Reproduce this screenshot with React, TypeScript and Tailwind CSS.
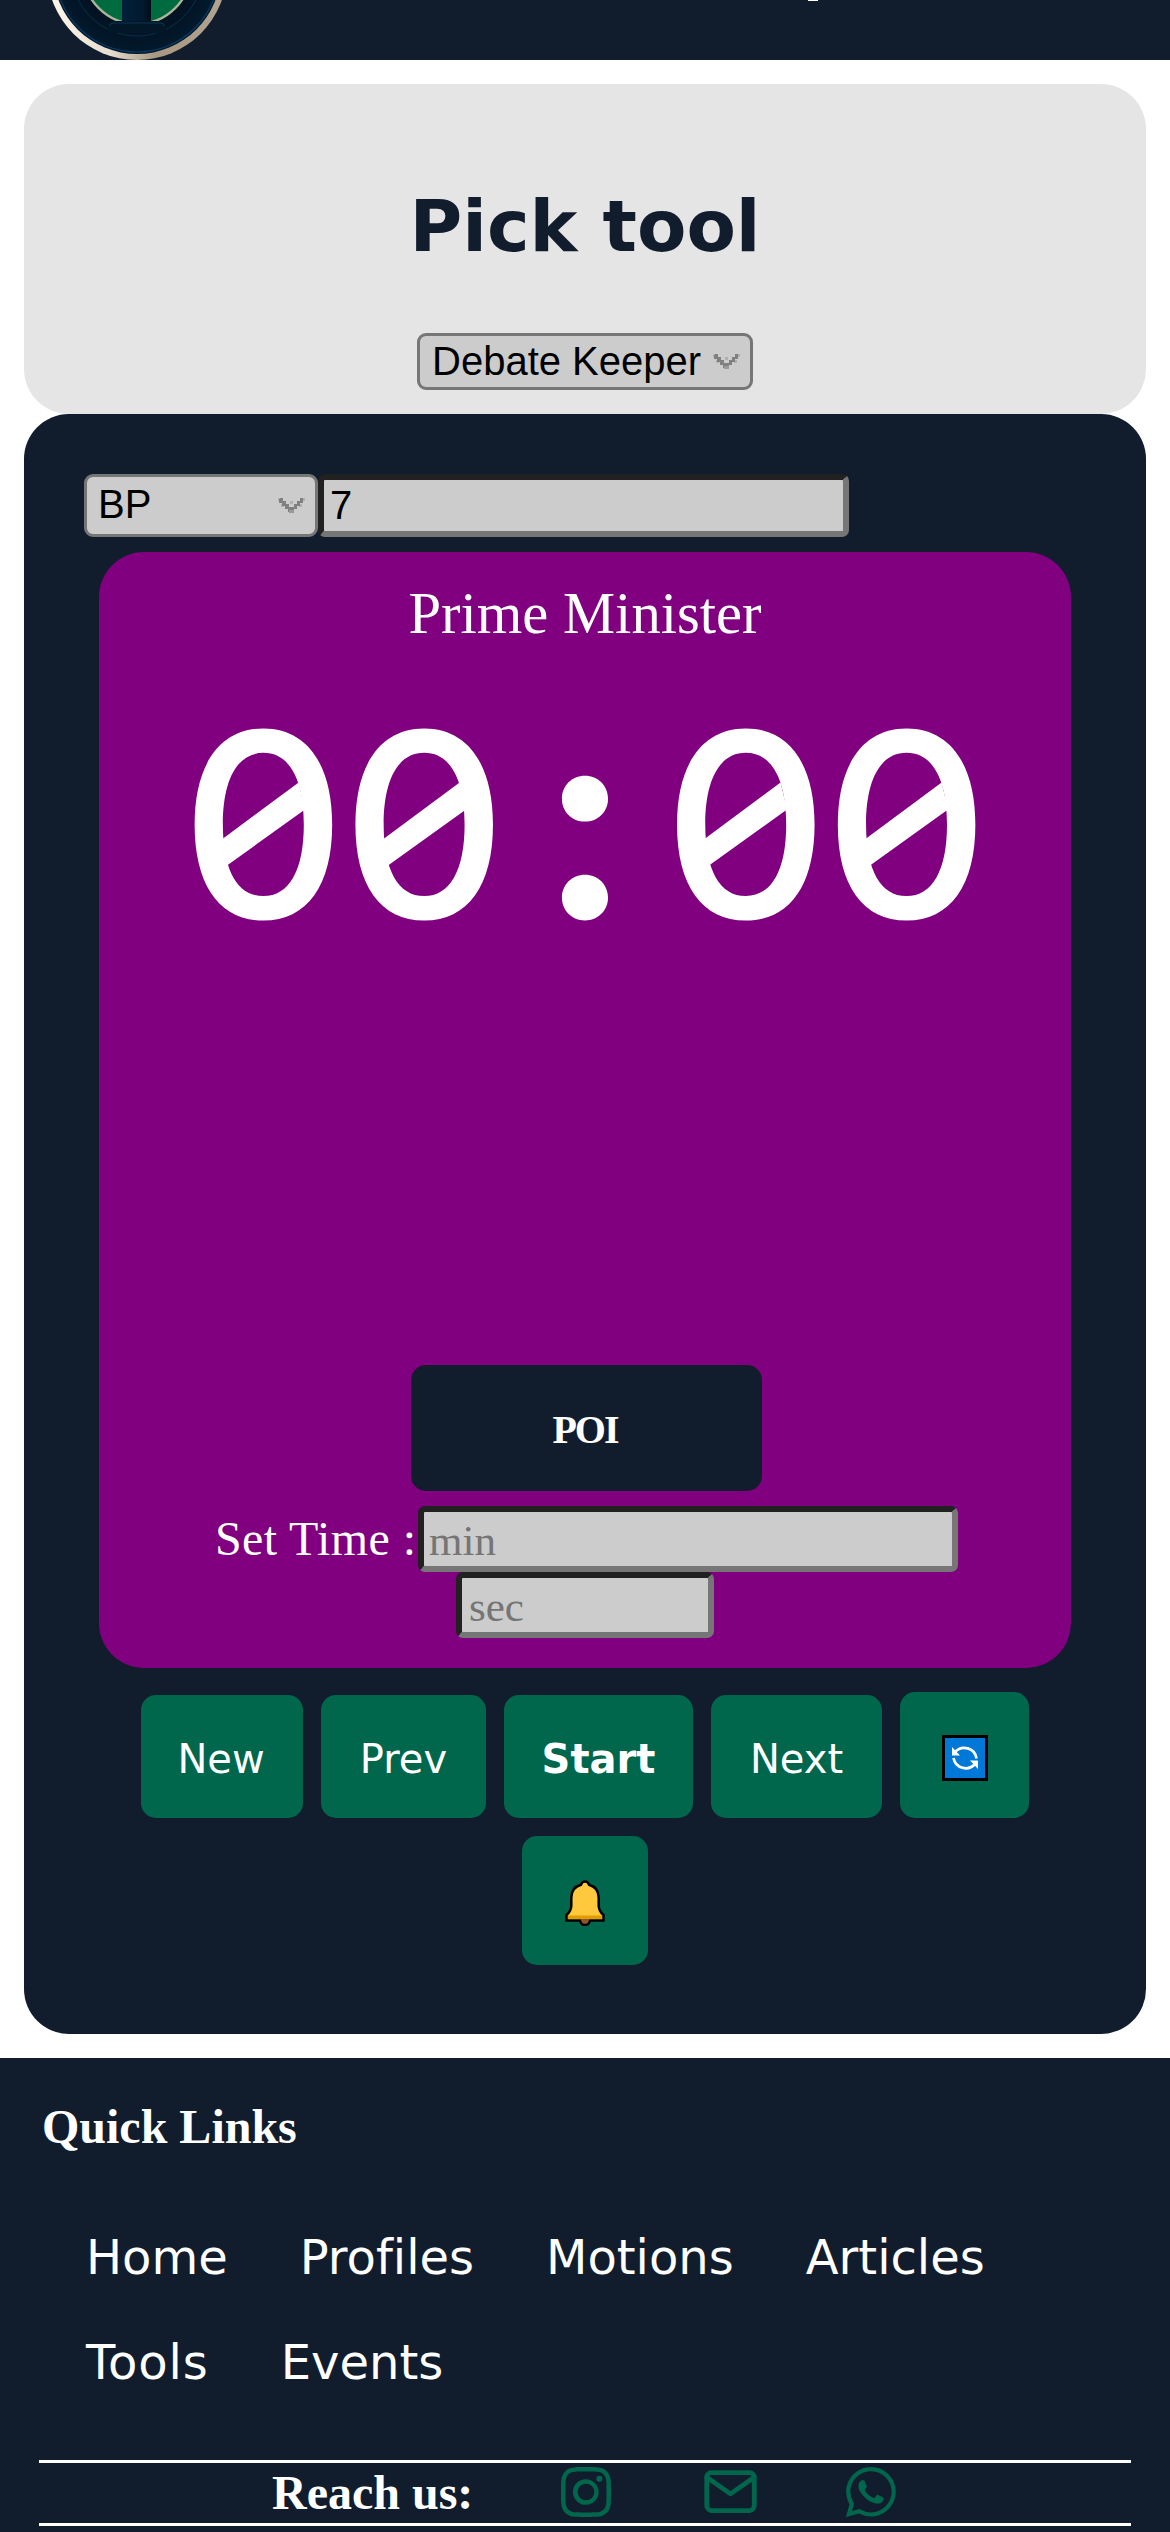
import type { ReactNode } from "react";
import { BsInstagram, BsWhatsapp } from "react-icons/bs";
import { FiMail } from "react-icons/fi";

const field =
  "shrink-0 rounded-[7px] border-[6px] border-t-[#212121] border-l-[#212121] border-r-[#767676] border-b-[#767676] bg-[#cccccc] outline-none";

function Chevron() {
  return (
    <svg width="27" height="15" viewBox="0 0 27 15" shapeRendering="crispEdges" className="shrink-0">
      <path fill="#b0b0b0" d="M0 0h3v3h-3zM24 0h3v3h-3zM3 6h3v3h-3zM21 6h3v3h-3zM12 3h3v3h-3z" />
      <path fill="#808080" d="M2 0h3v3h3v3h3v3h5v-3h3v-3h3v-3h3v5h-3v3h-3v3h-3v3h-6v-3h-3v-3h-3v-3h-3v-3h-1z" />
      <path fill="#9a9a9a" d="M11 12h5v3h-5z" />
    </svg>
  );
}

function Logo() {
  return (
    <svg width="180" height="180" viewBox="0 0 180 180" className="ml-[47px] shrink-0">
      <defs>
        <linearGradient id="rim" x1="0" y1="0" x2="1" y2="0">
          <stop offset="0" stopColor="#fff8ea" />
          <stop offset="0.35" stopColor="#e6dccf" />
          <stop offset="0.6" stopColor="#a89780" />
          <stop offset="1" stopColor="#b3a592" />
        </linearGradient>
        <radialGradient id="disc">
          <stop offset="0.6" stopColor="#02101e" />
          <stop offset="1" stopColor="#021a2e" />
        </radialGradient>
        <linearGradient id="stem" x1="0" y1="0" x2="1" y2="0">
          <stop offset="0" stopColor="#02203a" />
          <stop offset="0.7" stopColor="#021a30" />
          <stop offset="1" stopColor="#010c18" />
        </linearGradient>
      </defs>
      <circle cx="90" cy="90" r="90" fill="url(#rim)" />
      <circle cx="90" cy="90" r="84" fill="url(#disc)" />
      <circle cx="90" cy="90" r="82" fill="none" stroke="#0c3a63" strokeWidth="1.2" />
      <circle cx="90" cy="90" r="66" fill="none" stroke="#07304a" strokeWidth="1" />
      <circle cx="90" cy="90" r="54" fill="#006b3f" stroke="#a9b49a" strokeWidth="2.4" />
      <rect x="75" y="20" width="29" height="125" fill="url(#stem)" />
      <rect x="61" y="141" width="58" height="12" rx="4" fill="#021728" />
      <path d="M63 146q0-3 4-3h46q4 0 4 3" fill="none" stroke="#0d3654" strokeWidth="1.2" />
    </svg>
  );
}

function Zero() {
  return (
    <span className="relative flex w-[160.8px] justify-center">
      0
      <svg width="160" height="210" viewBox="0 0 160 210" className="absolute top-0 left-0">
        <path d="M32 124.500 115.600 62.500 122 89.500 44 145.500z" fill="#fff" />
      </svg>
    </span>
  );
}

function ToolButton({ className, children }: { className: string; children: ReactNode }) {
  return (
    <button className={`flex shrink-0 items-center justify-center rounded-[15px] bg-[#00674d] pt-1 text-[40px] leading-none text-white ${className}`}>
      {children}
    </button>
  );
}

function RefreshIcon() {
  return (
    <svg width="46" height="46" viewBox="0 0 46 46" className="mt-[2px]">
      <rect x="1.5" y="1.5" width="43" height="43" fill="#0078d7" stroke="#000" strokeWidth="3" />
      <path d="M13 17a12.4 12.4 0 0 1 21.500 6.500M33 29a12.400 12.400 0 0 1-21.500-6" fill="none" stroke="#fff" strokeWidth="2.700" />
      <path d="M10 12v8.500h8zM36 34v-8.500h-8z" fill="#fff" />
    </svg>
  );
}

function BellIcon() {
  return (
    <svg width="40" height="46" viewBox="0 0 40 46">
      <circle cx="20" cy="40" r="5" fill="#8e562e" stroke="#000" strokeWidth="2.500" />
      <path
        d="M20 1.500c2.200 0 3.500 1.300 4 3.300 6.300 1.800 9.700 6.500 9.700 12.700v8c0 4.500 1.800 7 4.800 9.500v5.500h-37v-5.500c3-2.500 4.800-5 4.800-9.500v-8c0-6.200 3.400-10.900 9.700-12.700.500-2 1.800-3.300 4-3.300z"
        fill="#ffc83d"
        stroke="#000"
        strokeWidth="2.500"
      />
      <path d="M3 35.500h34v3.500H3z" fill="#e19d00" />
      <path d="M15.800 39h8.400a4.200 4.200 0 0 1-8.400 0z" fill="#8e562e" />
    </svg>
  );
}

export default function App() {
  return (
    <div className="h-[2532px] w-[1170px] overflow-hidden bg-white font-['DejaVu_Sans',sans-serif] text-white">
      <header className="flex h-[60px] items-end bg-[#111d2d]">
        <Logo />
        <span className="mb-[59px] ml-[581px] h-px w-[10px] bg-white" />
      </header>

      <section className="mx-6 mt-6 flex h-[330px] flex-col items-center rounded-[45px] bg-[#e5e5e5]">
        <h1 className="mt-[100px] text-[72px] leading-[84px] font-bold whitespace-nowrap text-[#111d2d]">Pick tool</h1>
        <div className="mt-[65px] flex h-[57px] w-[336px] items-center justify-between rounded-[9px] border-[3px] border-[#767676] bg-[#cccccc] pr-[10px] pl-[12px] font-['Liberation_Sans',sans-serif] text-[40px] leading-[48px] whitespace-nowrap text-black">
          <span className="pb-[2px]">Debate Keeper</span>
          <Chevron />
        </div>
      </section>

      <main className="mx-6 flex h-[1620px] flex-col rounded-[45px] bg-[#111d2d] pt-[60px]">
        <div className="ml-[60px] flex h-[63px] font-['Liberation_Sans',sans-serif] text-[40px] text-black">
          <div className="flex w-[234px] items-center justify-between rounded-[9px] border-[3px] border-[#767676] bg-[#cccccc] pr-[10px] pl-[11px] leading-[48px]">
            <span className="pb-[3px]">BP</span>
            <Chevron />
          </div>
          <input className={`${field} w-[531px] px-[6px] pb-px`} defaultValue="7" />
        </div>

        <section className="mx-[75px] mt-[15px] flex h-[1116px] flex-col items-center rounded-[45px] bg-[#800080]">
          <h2 className="mt-[28px] font-['Liberation_Serif',serif] text-[58.600px] leading-[68px] whitespace-nowrap">Prime Minister</h2>
          <div className="mt-[66px] flex h-[210px] items-baseline justify-center font-['Inter',sans-serif] text-[257px] leading-[210px] font-medium">
            <Zero />
            <Zero />
            <span className="flex w-[160.800px] justify-center text-[273px] leading-[210px] font-bold">:</span>
            <Zero />
            <Zero />
          </div>
          <button className="mt-[441px] ml-[3px] h-[126px] w-[351px] shrink-0 rounded-[15px] bg-[#111d2d] pt-[3px] pr-[3px] font-['Liberation_Serif',serif] text-[40px] font-bold tracking-[-2px]">
            POI
          </button>
          <div className="mt-[15px] flex h-[66px] items-center self-start font-['Liberation_Serif',serif]">
            <label className="ml-[116px] w-[203px] text-[48px] tracking-[0.4px] leading-[56px] whitespace-nowrap">Set Time :</label>
            <input className={`${field} h-[66px] w-[540px] px-[5px] pt-[3px] text-[43px] placeholder:text-[#757575]`} placeholder="min" />
          </div>
          <input className={`${field} h-[66px] w-[258px] px-[7px] pt-[3px] font-['Liberation_Serif',serif] text-[43px] placeholder:text-[#757575]`} placeholder="sec" />
        </section>

        <div className="mt-6 flex items-end justify-center gap-[18px]">
          <ToolButton className="h-[123px] w-[162px] pr-[2px]">New</ToolButton>
          <ToolButton className="h-[123px] w-[165px]">Prev</ToolButton>
          <ToolButton className="h-[123px] w-[189px] font-bold">Start</ToolButton>
          <ToolButton className="h-[123px] w-[171px]">Next</ToolButton>
          <ToolButton className="h-[126px] w-[129px]"><RefreshIcon /></ToolButton>
        </div>
        <div className="mt-[18px] flex justify-center">
          <ToolButton className="h-[129px] w-[126px]"><BellIcon /></ToolButton>
        </div>
      </main>

      <footer className="mt-6 h-[474px] bg-[#111d2d] px-[39px] pt-[41px]">
        <h3 className="pl-[3px] font-['Liberation_Serif',serif] text-[48px] leading-[56px] font-bold">Quick Links</h3>
        <nav className="mt-[74px] pl-[47px] text-[48px] leading-[56px] [font-variant-ligatures:none]">
          <div className="flex gap-[72px]">
            <a>Home</a>
            <a>Profiles</a>
            <a>Motions</a>
            <a>Articles</a>
          </div>
          <div className="mt-[49px] flex gap-[72px]">
            <a className="tracking-[0.9px]">Tools</a>
            <a>Events</a>
          </div>
        </nav>
        <div className="mt-[70px] flex h-[66px] items-center border-y-[3px] border-white pl-[233px] text-[#00674d]">
          <span className="w-[289px] font-['Liberation_Serif',serif] text-[48px] leading-[56px] font-bold text-white">Reach us:</span>
          <BsInstagram size={50} className="mb-[3px]" />
          <FiMail size={57} className="mb-[3px] ml-[91px]" />
          <BsWhatsapp size={50} className="mb-[3px] ml-[87px]" />
        </div>
      </footer>
    </div>
  );
}
